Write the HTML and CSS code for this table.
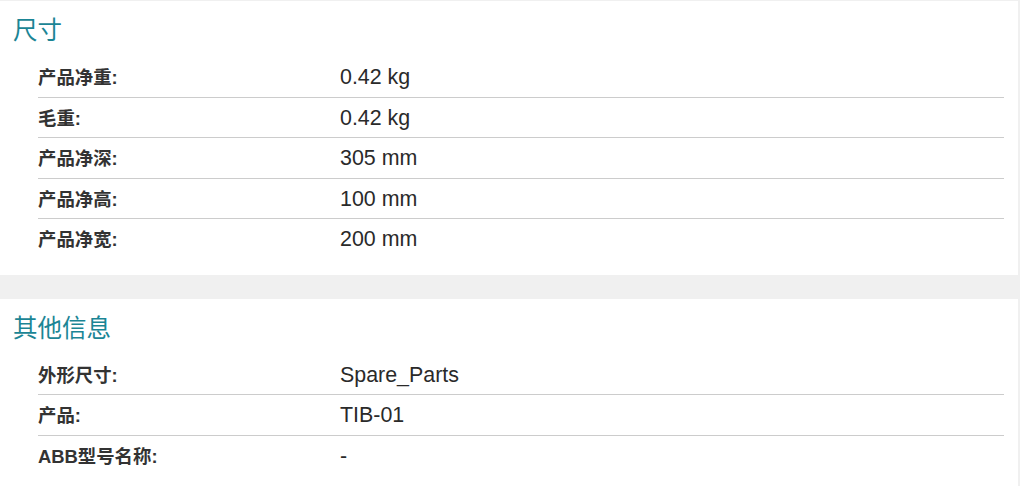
FILE: index.html
```html
<!DOCTYPE html>
<html lang="zh-CN">
<head>
<meta charset="utf-8">
<title>产品信息</title>
<link rel="stylesheet" href="styles.css">
</head>
<body>
<div class="page">
  <section class="card">
    <h2 class="card-title">尺寸</h2>
    <dl class="spec-list">
      <div class="spec-row"><dt class="spec-label">产品净重:</dt><dd class="spec-value">0.42 kg</dd></div>
      <div class="spec-row"><dt class="spec-label">毛重:</dt><dd class="spec-value">0.42 kg</dd></div>
      <div class="spec-row"><dt class="spec-label">产品净深:</dt><dd class="spec-value">305 mm</dd></div>
      <div class="spec-row"><dt class="spec-label">产品净高:</dt><dd class="spec-value">100 mm</dd></div>
      <div class="spec-row"><dt class="spec-label">产品净宽:</dt><dd class="spec-value">200 mm</dd></div>
    </dl>
  </section>
  <section class="card">
    <h2 class="card-title">其他信息</h2>
    <dl class="spec-list">
      <div class="spec-row"><dt class="spec-label">外形尺寸:</dt><dd class="spec-value">Spare_Parts</dd></div>
      <div class="spec-row"><dt class="spec-label">产品:</dt><dd class="spec-value">TIB-01</dd></div>
      <div class="spec-row"><dt class="spec-label">ABB型号名称:</dt><dd class="spec-value">-</dd></div>
    </dl>
  </section>
</div>
</body>
</html>
```
FILE: styles.css
```css
html, body {
  margin: 0;
  padding: 0;
  background: #f0f0f0;
}

body {
  font-family: "Liberation Sans", "Noto Sans CJK SC", sans-serif;
  color: #333333;
}

.page {
  display: flex;
  flex-direction: column;
  gap: 24px;
  padding-top: 1px;
  width: 1018px;
}

.card {
  background: #ffffff;
  padding: 15px 14px 15px 13px;
}

.card-title {
  margin: 0 0 11px 0;
  font-family: "Liberation Sans", "Noto Sans CJK SC", sans-serif;
  font-weight: normal;
  font-size: 24.5px;
  line-height: 30px;
  color: #1b8595;
}

.spec-list {
  margin: 0 0 0 25px;
  padding: 0;
}

.spec-row {
  display: flex;
  align-items: baseline;
  height: 40.5px;
  box-sizing: border-box;
  padding-top: 8px;
  border-bottom: 1px solid #cccccc;
}

.spec-row:last-child {
  border-bottom: none;
}

.spec-label {
  width: 302px;
  flex: none;
  margin: 0;
  font-weight: bold;
  font-size: 18.4px;
  line-height: 24px;
  color: #333333;
}

.spec-value {
  margin: 0;
  font-size: 21.4px;
  line-height: 24px;
  color: #2a2a2a;
}
```
